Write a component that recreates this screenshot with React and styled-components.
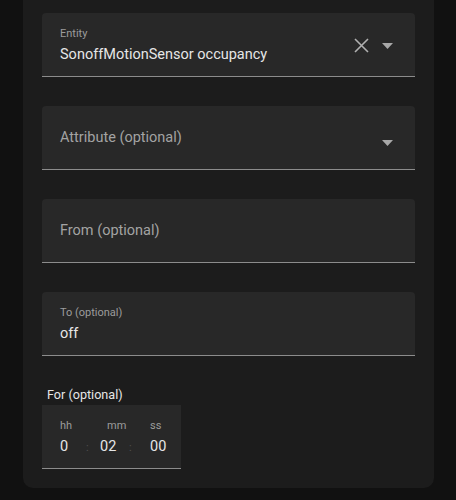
import React from 'react'
import styled, { createGlobalStyle } from 'styled-components'

const GlobalStyle = createGlobalStyle`
  html, body {
    margin: 0;
    background: #111111;
    font-family: Roboto, "Noto Sans", sans-serif;
    -webkit-font-smoothing: antialiased;
  }
`

const Page = styled.div`
  width: 456px;
  height: 500px;
  padding: 0 22px 0 23px;
  box-sizing: border-box;
`

const Card = styled.section`
  background: #1c1c1c;
  border-radius: 0 0 10px 10px;
  padding: 13px 19px 19px;
  display: flex;
  flex-direction: column;
  gap: 29px;
`

const Field = styled.div`
  position: relative;
  height: 63px;
  background: #282828;
  border-radius: 4px 4px 0 0;
  border-bottom: 1px solid #8c8c8c;
  padding: 0 18px;
  display: flex;
  align-items: ${p => (p.$filled ? 'stretch' : 'center')};
  gap: 12px;
`

const Content = styled.div`
  flex: 1;
  display: flex;
  flex-direction: column;
`

const Label = styled.span`
  font-size: 11px;
  color: #9c9c9c;
  margin-top: 14px;
  line-height: 14px;
`

const Value = styled.span`
  font-size: 14.5px;
  color: #e6e6e6;
  margin-top: 5px;
  line-height: 18px;
`

const Placeholder = styled.span`
  flex: 1;
  font-size: 14.5px;
  color: #a3a3a3;
  margin-top: ${p => p.$offset || 0}px;
`

const Icons = styled.div`
  display: flex;
  align-items: center;
  gap: 10px;
  margin-right: 2px;
  margin-top: ${p => p.$offset || 0}px;
`

const IconBtn = styled.span`
  display: inline-flex;
  width: 16px;
  height: 16px;
  align-items: center;
  justify-content: center;
`

const DurationWrap = styled.div`
  display: flex;
  flex-direction: column;
  margin-top: 2px;
`

const DurationTitle = styled.span`
  font-size: 12.6px;
  color: #e6e6e6;
  padding-left: 5px;
  line-height: 16px;
  margin-bottom: 2px;
`

const DurationBox = styled.div`
  width: 139px;
  height: 64px;
  box-sizing: border-box;
  background: #282828;
  border-bottom: 1px solid #8c8c8c;
  padding: 14px 0 0 18px;
  display: grid;
  grid-template-columns: 26px 14px 29px 21px auto;
  grid-template-rows: 14px 23px;
`

const UnitLabel = styled.span`
  font-size: 11px;
  color: #9c9c9c;
  line-height: 14px;
  padding-left: ${p => p.$shift || 0}px;
`

const UnitValue = styled.span`
  font-size: 14.5px;
  color: #e6e6e6;
  line-height: 18px;
  align-self: end;
`

const Colon = styled.span`
  font-size: 11px;
  color: #505050;
  align-self: end;
  padding-bottom: 2px;
`

const Arrow = () => (
  <svg width="11" height="6" viewBox="0 0 11 6">
    <path d="M0 0h11L5.5 6z" fill="#a8a8a8" />
  </svg>
)

const Clear = () => (
  <svg width="15" height="15" viewBox="0 0 15 15">
    <path d="M1 1l13 13M14 1L1 14" stroke="#b0b0b0" strokeWidth="1.6" />
  </svg>
)

const units = [
  { key: 'hh', value: '0' },
  { key: 'mm', value: '02', shift: 7 },
  { key: 'ss', value: '00' },
]

const App = () => {
  return (
    <>
      <GlobalStyle />
      <Page>
        <Card>
          <Field $filled>
            <Content>
              <Label>Entity</Label>
              <Value>SonoffMotionSensor occupancy</Value>
            </Content>
            <Icons $offset={2}>
              <IconBtn><Clear /></IconBtn>
              <IconBtn><Arrow /></IconBtn>
            </Icons>
          </Field>

          <Field>
            <Placeholder $offset={0}>Attribute (optional)</Placeholder>
            <Icons $offset={10}>
              <IconBtn><Arrow /></IconBtn>
            </Icons>
          </Field>

          <Field>
            <Placeholder>From (optional)</Placeholder>
          </Field>

          <Field $filled>
            <Content>
              <Label>To (optional)</Label>
              <Value>off</Value>
            </Content>
          </Field>

          <DurationWrap>
            <DurationTitle>For (optional)</DurationTitle>
            <DurationBox>
              {units.map((u, i) => (
                <React.Fragment key={u.key}>
                  <UnitLabel $shift={u.shift} style={{ gridColumn: i * 2 + 1, gridRow: 1 }}>{u.key}</UnitLabel>
                  <UnitValue style={{ gridColumn: i * 2 + 1, gridRow: 2 }}>{u.value}</UnitValue>
                  {i < units.length - 1 && <Colon style={{ gridColumn: i * 2 + 2, gridRow: 2 }}>:</Colon>}
                </React.Fragment>
              ))}
            </DurationBox>
          </DurationWrap>
        </Card>
      </Page>
    </>
  )
}

export default App
